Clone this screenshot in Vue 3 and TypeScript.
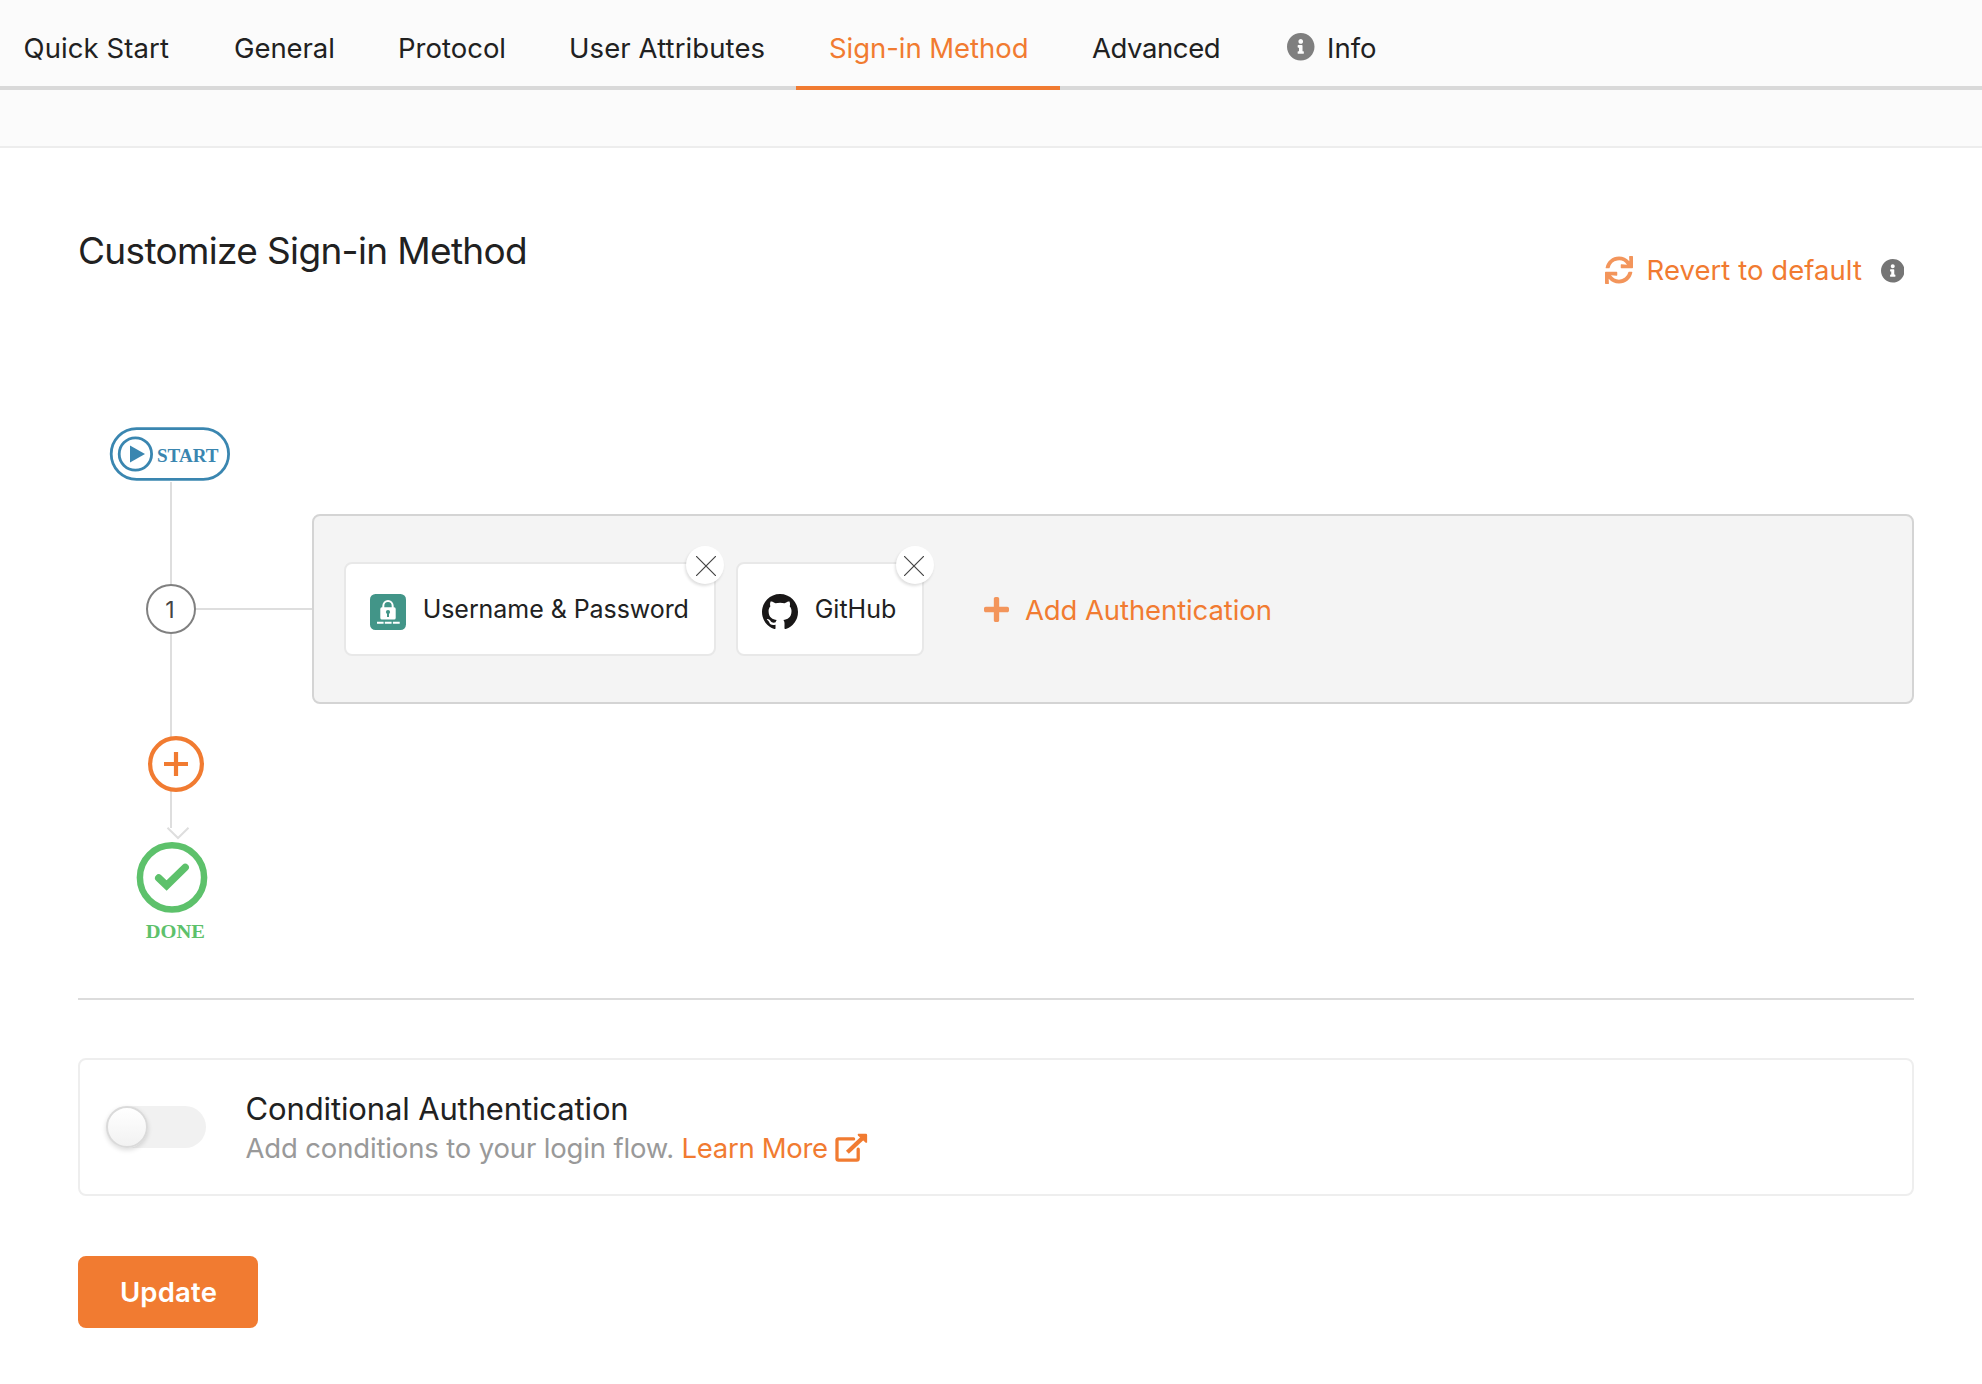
<script setup lang="ts">
import { ref } from 'vue'

interface Tab {
  label: string
  cls: string
  info?: boolean
}

interface Authenticator {
  name: string
  icon: 'lock' | 'github'
}

const tabs: Tab[] = [
  { label: 'Quick Start', cls: 'quick' },
  { label: 'General', cls: 'general' },
  { label: 'Protocol', cls: 'protocol' },
  { label: 'User Attributes', cls: 'attributes' },
  { label: 'Sign-in Method', cls: 'signin' },
  { label: 'Advanced', cls: 'advanced' },
  { label: 'Info', cls: 'info', info: true }
]

const active = ref('Sign-in Method')
const conditional = ref(false)
const authenticators = ref<Authenticator[]>([
  { name: 'Username & Password', icon: 'lock' },
  { name: 'GitHub', icon: 'github' }
])

function remove(name: string) {
  authenticators.value = authenticators.value.filter((a) => a.name !== name)
}

const infoPath =
  'M256 8C119.043 8 8 119.083 8 256c0 136.997 111.043 248 248 248s248-111.003 248-248C504 119.083 392.957 8 256 8zm0 110c23.196 0 42 18.804 42 42s-18.804 42-42 42-42-18.804-42-42 18.804-42 42-42zm56 254c0 6.627-5.373 12-12 12h-88c-6.627 0-12-5.373-12-12v-24c0-6.627 5.373-12 12-12h12v-64h-12c-6.627 0-12-5.373-12-12v-24c0-6.627 5.373-12 12-12h64c6.627 0 12 5.373 12 12v100h12c6.627 0 12 5.373 12 12v24z'
</script>

<template>
  <div class="page">
    <nav class="tabs">
      <a
        v-for="tab in tabs"
        :key="tab.label"
        class="tab"
        :class="[tab.cls, { active: tab.label === active }]"
        @click="active = tab.label"
      >
        <svg v-if="tab.info" class="tab-icon" viewBox="8 8 496 496"><path :d="infoPath" /></svg>
        <span>{{ tab.label }}</span>
      </a>
    </nav>
    <div class="strip"></div>

    <main class="content">
      <header class="head">
        <h1>Customize Sign-in Method</h1>
        <div class="revert">
          <svg class="sync" viewBox="0 0 512 512">
            <path d="M440.65 12.57l4 82.77A247.16 247.16 0 0 0 255.83 8C134.73 8 33.91 94.92 12.29 209.82A12 12 0 0 0 24.09 224h49.05a12 12 0 0 0 11.67-9.26 175.91 175.91 0 0 1 317-56.94l-101.46-4.86a12 12 0 0 0-12.57 12v47.41a12 12 0 0 0 12 12H500a12 12 0 0 0 12-12V12a12 12 0 0 0-12-12h-47.37a12 12 0 0 0-11.98 12.57zM255.83 432a175.61 175.61 0 0 1-146-77.8l101.8 4.87a12 12 0 0 0 12.57-12v-47.4a12 12 0 0 0-12-12H12a12 12 0 0 0-12 12V500a12 12 0 0 0 12 12h47.35a12 12 0 0 0 12-12.6l-4.15-82.57A247.17 247.17 0 0 0 255.83 504c121.11 0 221.93-86.92 243.55-201.82a12 12 0 0 0-11.8-14.18h-49.05a12 12 0 0 0-11.67 9.26A175.86 175.86 0 0 1 255.83 432z" />
          </svg>
          <span class="revert-label">Revert to default</span>
          <svg class="hint" viewBox="8 8 496 496"><path :d="infoPath" /></svg>
        </div>
      </header>

      <section class="flow">
        <svg class="rail" width="234" height="520" viewBox="0 0 234 520">
          <g class="wire">
            <path d="M93 55V157M93 207V401M118 182H234" />
            <path d="M89.5 400.8L100 411L110.5 400.8" />
          </g>
          <g class="start">
            <rect x="33.2" y="1.6" width="117.4" height="50.8" rx="25.4" />
            <circle cx="57.4" cy="27" r="16.2" />
            <path d="M52 18.5L67 27L52 35.5Z" />
            <text x="79" y="35" textLength="61.5" lengthAdjust="spacingAndGlyphs">START</text>
          </g>
          <g class="step">
            <circle cx="93" cy="182" r="24" />
            <text x="92" y="190.7" text-anchor="middle">1</text>
          </g>
          <g class="add-step">
            <circle cx="98" cy="337" r="25.9" />
            <path d="M86 337H110M98 325V349" />
          </g>
          <g class="done">
            <circle cx="94" cy="450.4" r="32.1" />
            <path d="M80.7 451L88.6 458.5L107.2 440.3" />
            <text x="67.8" y="511" textLength="59.2" lengthAdjust="spacingAndGlyphs">DONE</text>
          </g>
        </svg>

        <div class="panel">
          <div v-for="auth in authenticators" :key="auth.name" class="auth" :class="auth.icon">
            <svg v-if="auth.icon === 'lock'" class="auth-icon" viewBox="0 0 36 36">
              <rect width="36" height="36" rx="5.5" fill="#429588" />
              <path d="M13.3 14.5V12a4.7 4.9 0 0 1 9.4 0V14.5" fill="none" stroke="#fff" stroke-width="2" />
              <rect x="10.3" y="13.3" width="15.4" height="12.3" rx="1.6" fill="#fff" />
              <circle cx="18" cy="18" r="2.1" fill="#429588" />
              <path d="M18 18v5" stroke="#429588" stroke-width="2" />
              <path d="M7 28.8h6.6M14.8 28.8h6.8M22.9 28.8h6.8" stroke="#fff" stroke-width="2" />
            </svg>
            <svg v-else class="auth-icon" viewBox="0 0 16 16">
              <path fill="#191717" fill-rule="evenodd" d="M8 0C3.58 0 0 3.58 0 8c0 3.54 2.29 6.53 5.47 7.59.4.07.55-.17.55-.38 0-.19-.01-.82-.01-1.49-2.01.37-2.53-.49-2.69-.94-.09-.23-.48-.94-.82-1.13-.28-.15-.68-.52-.01-.53.63-.01 1.08.58 1.23.82.72 1.21 1.87.87 2.33.66.07-.52.28-.87.51-1.07-1.78-.2-3.64-.89-3.64-3.95 0-.87.31-1.59.82-2.15-.08-.2-.36-1.02.08-2.12 0 0 .67-.21 2.2.82.64-.18 1.32-.27 2-.27s1.36.09 2 .27c1.53-1.04 2.2-.82 2.2-.82.44 1.1.16 1.92.08 2.12.51.56.82 1.27.82 2.15 0 3.07-1.87 3.75-3.65 3.95.29.25.54.73.54 1.48 0 1.07-.01 1.93-.01 2.2 0 .21.15.46.55.38A8.01 8.01 0 0 0 16 8c0-4.42-3.58-8-8-8z" />
            </svg>
            <span class="auth-name">{{ auth.name }}</span>
            <button class="close" :aria-label="auth.name" @click="remove(auth.name)">
              <svg width="20" height="20" viewBox="0 0 20 20"><path d="M0 0L20 20M20 0L0 20" /></svg>
            </button>
          </div>
          <a class="add-auth">
            <svg width="25" height="25" viewBox="0 32 448 448">
              <path d="M416 208H272V64c0-17.67-14.33-32-32-32h-32c-17.67 0-32 14.33-32 32v144H32c-17.67 0-32 14.33-32 32v32c0 17.67 14.33 32 32 32h144v144c0 17.67 14.33 32 32 32h32c17.67 0 32-14.33 32-32V304h144c17.67 0 32-14.33 32-32v-32c0-17.67-14.33-32-32-32z" />
            </svg>
            <span>Add Authentication</span>
          </a>
        </div>
      </section>

      <section class="conditional">
        <button class="toggle" role="switch" :aria-checked="conditional" @click="conditional = !conditional">
          <span class="knob" :class="{ on: conditional }"></span>
        </button>
        <div class="cond-text">
          <h2>Conditional Authentication</h2>
          <p>
            <span class="desc">Add conditions to your login flow.</span>
            <a class="learn">Learn More</a>
            <svg class="external" width="33" height="30" viewBox="0 0 33 30">
              <path class="frame" d="M18.6 5.9H3.4Q2 5.9 2 7.3V25.8Q2 27.2 3.4 27.2H21.8Q23.2 27.2 23.2 25.8V16.2" />
              <path class="shaft" d="M12.4 19.2L28 4.6" />
              <path class="head-arrow" d="M23.2 .8H31Q32.1 .8 32.1 1.9V9.4Q31.4 10.2 30.4 9.4L23 2.6Q22.2 1.4 23.2 .8Z" />
            </svg>
          </p>
        </div>
      </section>

      <button class="update">Update</button>
    </main>
  </div>
</template>

<style>
body {
  background: #fff;
}
</style>

<style scoped>
.page {
  height: 1384px;
  overflow: hidden;
  background: #fff;
  color: #212121;
  font-family: Inter, 'Liberation Sans', sans-serif;
  font-size: 27.5px;
}
button {
  border: 0;
  padding: 0;
  font: inherit;
  cursor: pointer;
}
.tabs {
  box-sizing: border-box;
  display: flex;
  height: 90px;
  background: #fbfbfb;
  border-bottom: 4px solid #d9d9d9;
}
.tab {
  box-sizing: border-box;
  display: flex;
  flex: none;
  align-items: center;
  height: 90px;
  padding: 6px 0 0 33px;
  border-bottom: 4px solid transparent;
  white-space: nowrap;
  cursor: pointer;
}
.tab.active {
  color: #f17b31;
  border-bottom-color: #f17b31;
}
.tab span { line-height: 40px; margin-top: 4px; }
.tab.quick { width: 201px; padding-left: 23.5px; letter-spacing: .1px; }
.general { width: 164px; letter-spacing: -.08px; }
.protocol { width: 171px; letter-spacing: 0; }
.attributes { width: 260px; letter-spacing: .1px; }
.signin { width: 264px; letter-spacing: -.05px; }
.tab.advanced { width: 192px; padding-left: 32px; letter-spacing: -.42px; }
.tab.info { padding-left: 35px; letter-spacing: 0; }
.tab-icon {
  width: 27.5px;
  height: 27.5px;
  margin: 2px 12.5px 0 0;
  fill: #7f7f7f;
}
.strip {
  height: 56px;
  background: #fbfbfb;
  border-bottom: 2px solid #ededed;
}
.content {
  padding: 80px 68px 0 78px;
}
.head {
  display: flex;
  justify-content: space-between;
  height: 62px;
}
h1 {
  margin: 0;
  font-size: 37px;
  font-weight: 400;
  line-height: 45px;
  letter-spacing: -.66px;
}
.revert {
  display: flex;
  align-items: center;
  height: 40px;
  margin: 22px 10px 0 0;
  color: #f17b31;
  letter-spacing: .05px;
}
.sync {
  width: 28px;
  height: 28px;
  margin: -1px 14px 0 0;
  fill: #f3955b;
}
.hint {
  width: 23.5px;
  height: 23.5px;
  margin: 2px 0 0 18.5px;
  fill: #757575;
}
.flow {
  box-sizing: border-box;
  display: flex;
  height: 573px;
  margin-top: 137px;
  border-bottom: 2px solid #dcdcdc;
}
.rail { flex: none; }
.wire { fill: none; stroke: #dedede; stroke-width: 2; }
.start, .done { font-family: 'Liberation Serif', serif; font-weight: 700; font-size: 19px; }
.start { fill: #3a86b0; }
.start rect, .start circle { fill: none; stroke: #3a86b0; stroke-width: 2.8; }
.step circle { fill: #fff; stroke: #808080; stroke-width: 2; }
.step text { fill: #444; font-size: 23px; }
.add-step { fill: #fff; stroke: #f17b31; stroke-width: 4.2; }
.done { fill: #5dc16b; }
.done circle { fill: none; stroke: #5dc16b; stroke-width: 6.5; }
.done path { fill: none; stroke: #5dc16b; stroke-width: 7.4; stroke-linecap: round; }
.panel {
  box-sizing: border-box;
  display: flex;
  flex: 1;
  align-items: center;
  gap: 20px;
  height: 190px;
  margin-top: 87px;
  padding-left: 30px;
  background: #f4f4f4;
  border: 2px solid #d4d4d4;
  border-radius: 8px;
}
.auth {
  position: relative;
  box-sizing: border-box;
  display: flex;
  align-items: center;
  width: 188px;
  height: 94px;
  padding-left: 24px;
  background: #fff;
  border: 2px solid #e8e8e8;
  border-radius: 8px;
  font-size: 25px;
  white-space: nowrap;
}
.auth.lock { width: 372px; letter-spacing: -.06px; }
.auth-icon {
  flex: none;
  width: 36px;
  height: 36px;
  margin: 6px 16.7px 0 0;
}
.close {
  position: absolute;
  top: -18px;
  right: -12px;
  display: flex;
  align-items: center;
  justify-content: center;
  width: 38px;
  height: 38px;
  background: #fff;
  border-radius: 50%;
  box-shadow: -1px 2px 3px rgba(0, 0, 0, .13);
}
.lock .close { right: -10px; }
.close svg {
  margin: 2px 2px 0 0;
  fill: none;
  stroke: #444;
  stroke-width: 1.2;
}
.lock .close svg { margin: 2px 0 0 2px; }
.add-auth {
  display: flex;
  align-items: center;
  gap: 16px;
  margin: 1px 0 0 40px;
  color: #f17b31;
  letter-spacing: -.1px;
}
.add-auth svg { fill: #f3955b; }
.conditional {
  box-sizing: border-box;
  display: flex;
  align-items: center;
  height: 138px;
  margin-top: 58px;
  padding-left: 26px;
  border: 2px solid #eee;
  border-radius: 8px;
}
.toggle {
  display: flex;
  width: 100px;
  height: 42px;
  background: #f1f1f1;
  border-radius: 21px;
}
.knob {
  box-sizing: border-box;
  width: 42px;
  height: 42px;
  background: linear-gradient(#fff, #f2f2f2);
  border: 2px solid #dadada;
  border-radius: 50%;
  box-shadow: 0 2px 5px rgba(0, 0, 0, .14);
}
.knob.on { margin-left: 58px; }
.cond-text { margin: 2px 0 0 39.5px; }
h2 {
  margin: 0;
  font-size: 31px;
  font-weight: 400;
  line-height: 40px;
  letter-spacing: -.13px;
}
p {
  display: flex;
  height: 38px;
  margin: 0;
  line-height: 38px;
}
.desc { width: 436px; color: #999; letter-spacing: -.15px; white-space: nowrap; }
.learn { width: 153px; color: #f17b31; letter-spacing: -.3px; white-space: nowrap; }
.external { margin-top: 4px; }
.frame, .shaft { fill: none; stroke: #f17b31; stroke-width: 3.3; stroke-linejoin: round; stroke-linecap: round; }
.shaft { stroke-width: 4.2; stroke-linecap: butt; }
.head-arrow { fill: #f17b31; }
.update {
  width: 180px;
  height: 72px;
  margin-top: 60px;
  padding-left: 1px;
  background: #f17b31;
  border-radius: 8px;
  color: #fff;
  font-weight: 600;
  letter-spacing: .2px;
}
</style>
